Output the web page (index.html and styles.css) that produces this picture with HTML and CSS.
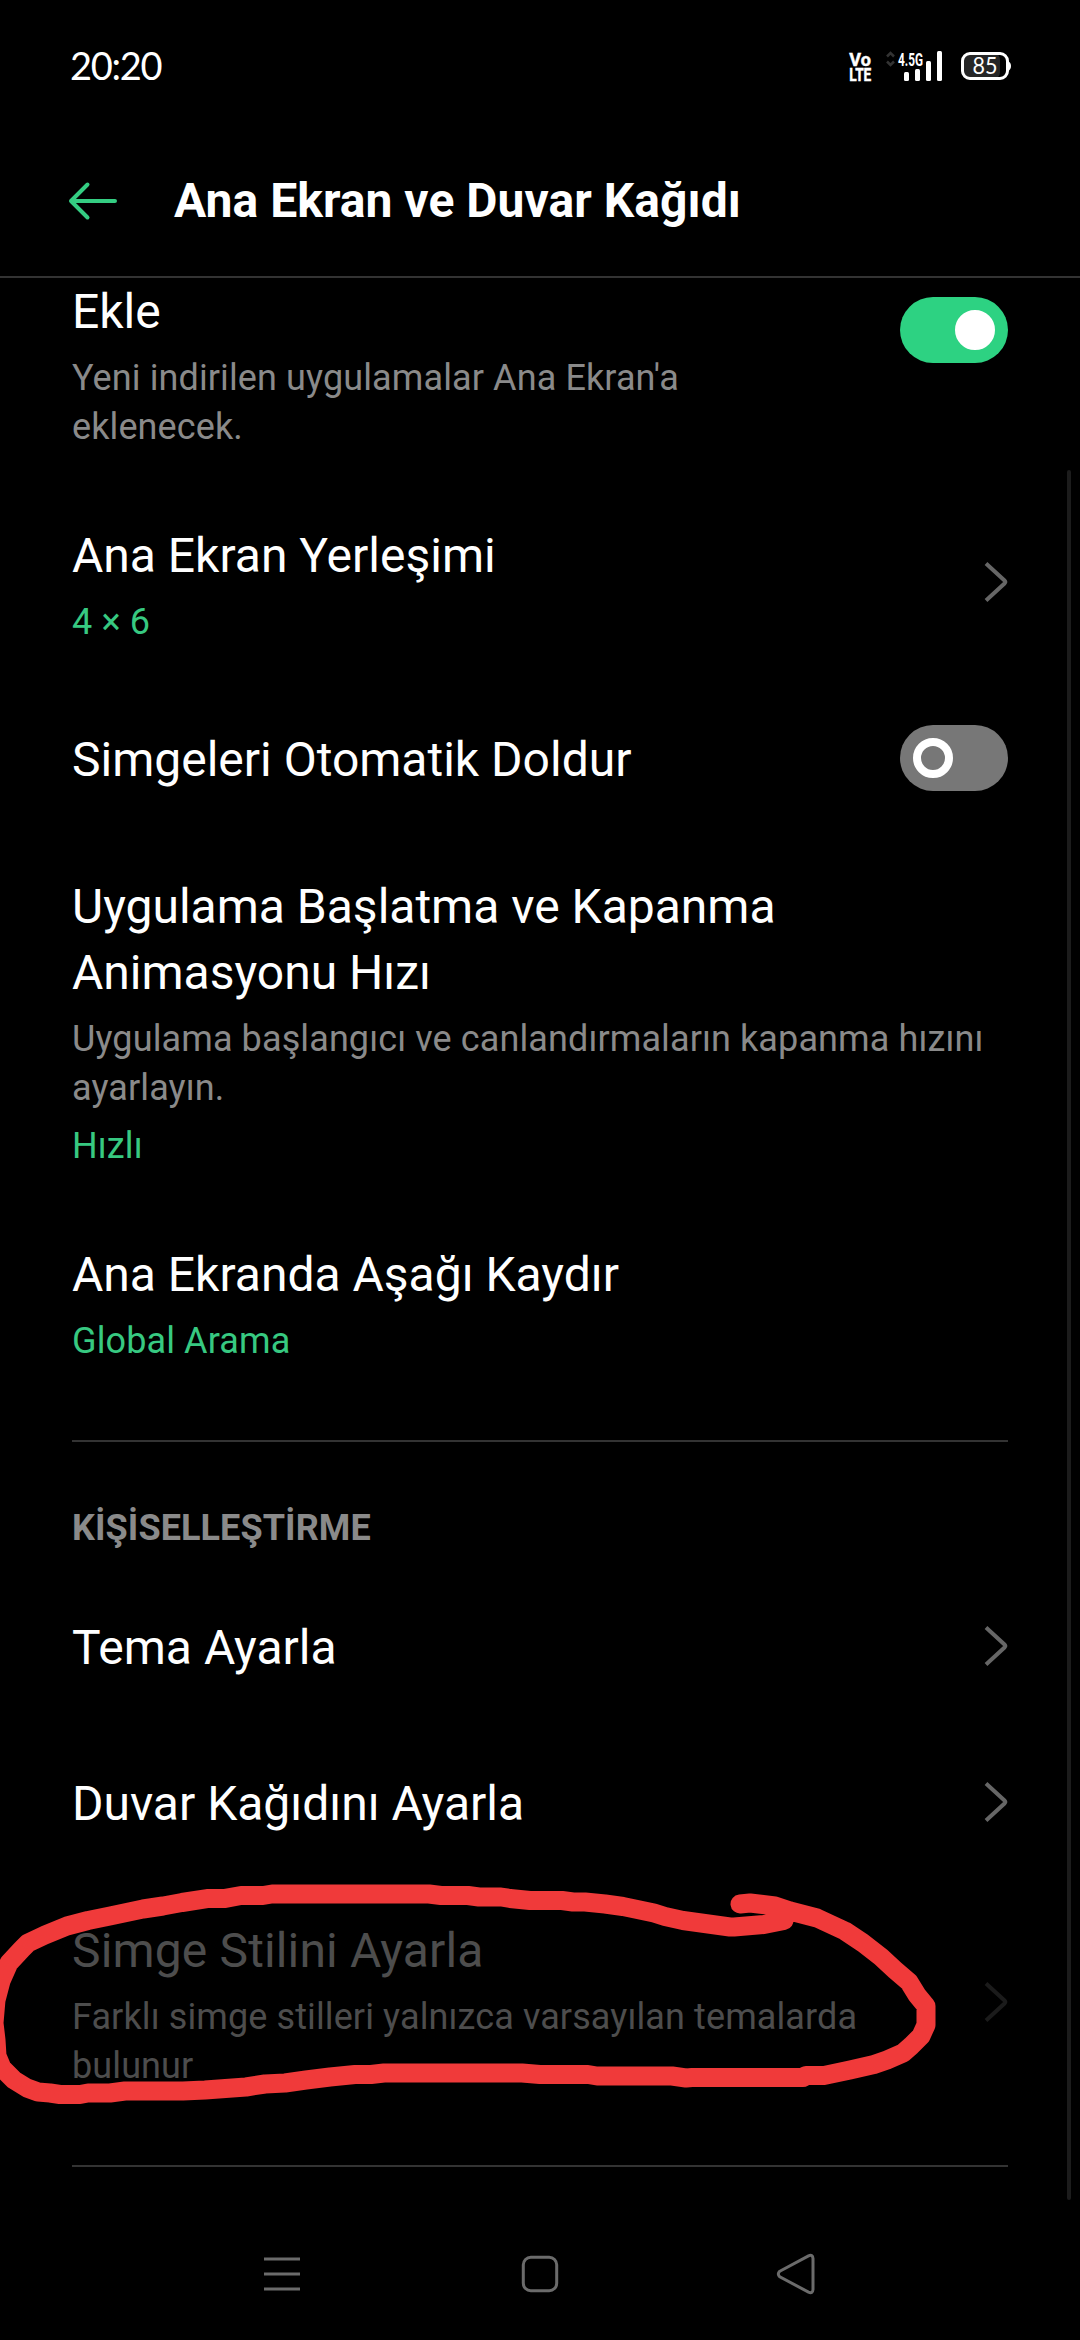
FILE: index.html
```html
<!DOCTYPE html>
<html lang="tr">
<head>
<meta charset="utf-8">
<title>Ana Ekran ve Duvar Kağıdı</title>
<link rel="stylesheet" href="styles.css">
</head>
<body>
<div class="screen">
  <div class="status-bar">
    <span class="clock">20:20</span>
    <div class="status-icons">
      <svg class="icon-volte" viewBox="0 0 24 32" width="24" height="32">
        <g fill="#fff" stroke="#fff" stroke-width="0.5" font-family="Roboto, sans-serif" font-weight="700">
          <text x="0.3" y="14.700" font-size="19" textLength="21.5" lengthAdjust="spacingAndGlyphs">Vo</text>
          <text x="0.3" y="30" font-size="19" textLength="22" lengthAdjust="spacingAndGlyphs">LTE</text>
        </g>
      </svg>
      <svg class="icon-signal" viewBox="0 0 56 32" width="56" height="32">
        <path d="M1 5.500l3.500-3.500 3.500 3.500M1 10.500l3.500 3.500 3.500-3.500" fill="none" stroke="#333" stroke-width="2.500"/>
        <text x="12" y="15" font-size="18.500" fill="#fff" font-family="Roboto, sans-serif" font-weight="700" textLength="25" lengthAdjust="spacingAndGlyphs">4.5G</text>
        <g fill="#fff">
          <rect x="18" y="21" width="5" height="9" rx="1.500"/>
          <rect x="29" y="18" width="5" height="12" rx="1.500"/>
          <rect x="40" y="10" width="5" height="20" rx="1.500"/>
          <rect x="51" y="0" width="5" height="30" rx="1.500"/>
        </g>
      </svg>
      <svg class="icon-battery" viewBox="0 0 50 32" width="50" height="32">
        <rect x="2" y="2.500" width="37" height="25" rx="6" fill="#262626"/>
        <rect x="1.500" y="2.500" width="45" height="25" rx="7.500" fill="none" stroke="#fff" stroke-width="3"/>
        <path d="M47 10q3 1.500 3 5t-3 5z" fill="#fff"/>
        <text x="11.500" y="22.700" font-size="22.500" fill="#fff" font-family="Lato, sans-serif" textLength="25" lengthAdjust="spacingAndGlyphs">85</text>
      </svg>
    </div>
  </div>

  <header class="app-bar">
    <svg class="back" viewBox="0 0 50 40" width="50" height="40" fill="none" stroke="#34cd82" stroke-width="4" stroke-linecap="round" stroke-linejoin="round"><path d="M47 20H3M19.500 3.500L3 20l16.500 16.500"/></svg>
    <h1>Ana Ekran ve Duvar Kağıdı</h1>
  </header>

  <main class="settings">
    <section class="row row-first">
      <div class="text">
        <h2>Ekle</h2>
        <p class="summary">Yeni indirilen uygulamalar Ana Ekran'a eklenecek.</p>
      </div>
      <div class="switch switch-on"><span class="knob"></span></div>
    </section>
    <section class="row">
      <div class="text">
        <h2>Ana Ekran Yerleşimi</h2>
        <p class="summary value">4 × 6</p>
      </div>
      <svg class="chevron" viewBox="0 0 24 40" width="24" height="40"><path d="M2 1.500L20.500 18.500q1.500 1.500 0 3L2 38.500"/></svg>
    </section>
    <section class="row">
      <div class="text"><h2>Simgeleri Otomatik Doldur</h2></div>
      <div class="switch"><span class="knob"></span></div>
    </section>
    <section class="row">
      <div class="text">
        <h2>Uygulama Başlatma ve Kapanma Animasyonu Hızı</h2>
        <p class="summary">Uygulama başlangıcı ve canlandırmaların kapanma hızını ayarlayın.</p>
        <p class="summary value">Hızlı</p>
      </div>
    </section>
    <section class="row">
      <div class="text">
        <h2>Ana Ekranda Aşağı Kaydır</h2>
        <p class="summary value">Global Arama</p>
      </div>
    </section>
    <hr class="divider">
    <h3 class="category">KİŞİSELLEŞTİRME</h3>
    <section class="row">
      <div class="text"><h2>Tema Ayarla</h2></div>
      <svg class="chevron" viewBox="0 0 24 40" width="24" height="40"><path d="M2 1.500L20.500 18.500q1.500 1.500 0 3L2 38.500"/></svg>
    </section>
    <section class="row">
      <div class="text"><h2>Duvar Kağıdını Ayarla</h2></div>
      <svg class="chevron" viewBox="0 0 24 40" width="24" height="40"><path d="M2 1.500L20.500 18.500q1.500 1.500 0 3L2 38.500"/></svg>
    </section>
    <section class="row row-disabled">
      <div class="text">
        <h2>Simge Stilini Ayarla</h2>
        <p class="summary">Farklı simge stilleri yalnızca varsayılan temalarda bulunur</p>
      </div>
      <svg class="chevron" viewBox="0 0 24 40" width="24" height="40"><path d="M2 1.500L20.500 18.500q1.500 1.500 0 3L2 38.500"/></svg>
    </section>
    <hr class="divider">
  </main>

  <nav class="nav-bar">
    <svg viewBox="0 0 40 44" width="40" height="44"><path d="M2 7h36M2 22h36M2 37h36"/></svg>
    <svg class="home" viewBox="0 0 40 44" width="40" height="44"><rect x="3.300" y="5.300" width="33.400" height="33.400" rx="7.500"/></svg>
    <svg viewBox="0 0 40 44" width="40" height="44"><path d="M3.800 19.200L32.500 3.900Q36.700 2 37 6.500V37.500Q36.700 42 32.500 40.100L3.800 24.800Q.800 22 3.800 19.200z"/></svg>
  </nav>

  <div class="scrollbar"></div>
  <svg class="marker" viewBox="0 1880 950 230" width="950" height="230">
    <path d="M740 1904L750 1903L775 1906L790 1911L817 1918L845 1931L863 1943L881 1957L895 1970L909 1982L917 1995L926 2006V2025L921 2036L911 2046L903 2053L887 2060L874 2064.500L850 2070L824 2075.500H806L803 2077.500H692L686 2078L672 2076H597L588 2074.500H540L522 2073H384L371 2074.500H355L330 2077L306 2080L285 2083L265 2084L246 2087L205 2090L183 2091H125L110 2093H88L80 2094.500H60L50 2093L38 2092L27 2088L14 2080L2 2068L-3 2056L-4 2040L-6 2023L-4 2000L1 1981L9 1963L22 1949L28 1943L45 1935L67 1926L88 1920.500L110 1916L143 1909L163 1906L182 1902.500L207 1898.600H224L241 1895.500H263L272 1894H429L441 1895.500H468L479 1897H501L510 1898.500L530 1900.500H562L573 1902H585L605 1904L623 1906.500L635 1909L654 1913L665 1916.500L683 1920.500L730 1927H734L764 1924.500L784 1920.500"/>
  </svg>
</div>
</body>
</html>
```
FILE: styles.css
```css
* {
  box-sizing: border-box;
  margin: 0;
}

body {
  background: #000;
  color: #fff;
  font-family: Roboto, "Noto Sans", sans-serif;
}

svg {
  display: block;
  flex: none;
  overflow: visible;
}

.screen {
  position: relative;
  display: flex;
  flex-direction: column;
  width: 1080px;
  height: 2340px;
  overflow: hidden;
  background: #000;
}

.status-bar {
  display: flex;
  justify-content: space-between;
  height: 126px;
  padding: 51px 69px 0 70px;
}

.clock {
  height: 46px;
  margin-top: -9px;
  font: 400 38px/46px Lato, sans-serif;
  letter-spacing: -1.3px;
}

.status-icons {
  display: flex;
}

.icon-signal {
  margin: 0 19px 0 13px;
}

.app-bar {
  display: flex;
  align-items: center;
  gap: 56px;
  height: 152px;
  padding: 0 68px;
  border-bottom: 2px solid #333;
}

.app-bar h1 {
  font-size: 48px;
  font-weight: 700;
  line-height: 66px;
  letter-spacing: 0.04px;
}

.settings {
  flex: 1;
}

.row {
  display: flex;
  align-items: center;
  min-height: 156px;
  padding: 36px 72px;
}

.row-first {
  align-items: flex-start;
  padding-top: 1px;
}

.text {
  flex: 1;
}

h2 {
  font-size: 48px;
  font-weight: 400;
  line-height: 66px;
}

.summary {
  max-width: 936px;
  margin: 9px 0 -1px;
  color: #8a8a8a;
  font-size: 36px;
  line-height: 49px;
  letter-spacing: 0.11px;
}

.summary + .summary {
  margin-top: 10px;
}

.summary.value {
  color: #37c981;
}

.row-first .summary {
  max-width: 640px;
}

.chevron {
  margin-bottom: 5px;
  fill: none;
  stroke: #666;
  stroke-width: 4;
}

.row-disabled h2 {
  color: #4d4d4d;
  letter-spacing: 0.15px;
}

.row-disabled .summary {
  max-width: 840px;
  color: #4d4d4d;
}

.row-disabled .chevron {
  stroke: #1b1b1b;
}

.switch {
  display: flex;
  width: 108px;
  height: 66px;
  margin-bottom: 4px;
  padding: 13px;
  border-radius: 33px;
  background: #777;
}

.knob {
  width: 40px;
  height: 40px;
  border: 8px solid #fff;
  border-radius: 50%;
}

.switch-on {
  justify-content: flex-end;
  margin-top: 18px;
  background: #2dd282;
}

.switch-on .knob {
  background: #fff;
}

.divider {
  height: 2px;
  margin: 39px 72px 0;
  border: 0;
  background: #333;
}

.category {
  padding: 62px 72px 17px;
  color: #8a8a8a;
  font-size: 36px;
  font-weight: 700;
  line-height: 49px;
  letter-spacing: 0.08px;
}

.nav-bar {
  display: flex;
  justify-content: space-between;
  height: 140px;
  padding: 52px 264px 0 262px;
}

.nav-bar svg {
  fill: none;
  stroke: #6b6b6b;
  stroke-width: 3;
}

.nav-bar .home {
  margin-left: 2px;
}

.scrollbar {
  position: absolute;
  top: 470px;
  left: 1067px;
  width: 4px;
  height: 1730px;
  border-radius: 2px;
  background: #1c1c1c;
}

.marker {
  position: absolute;
  top: 1880px;
  left: 0;
  fill: none;
  stroke: #f03a3a;
  stroke-width: 19;
  stroke-linecap: round;
  stroke-linejoin: round;
}
```
